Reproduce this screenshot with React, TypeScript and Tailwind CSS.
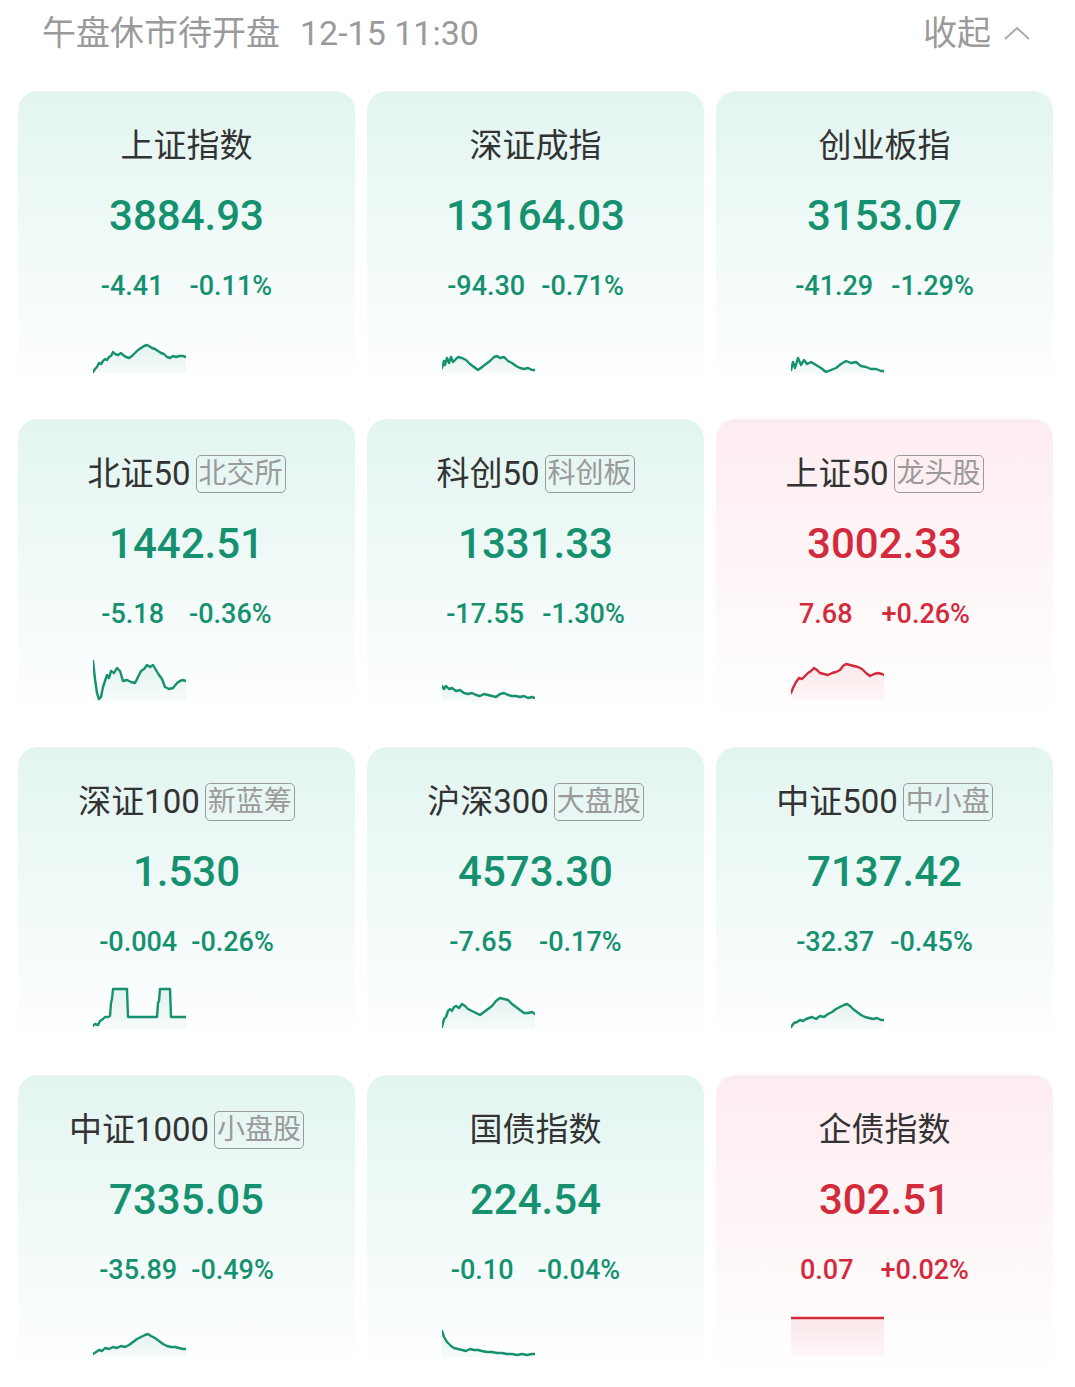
type Item = {
  name: string;
  tag?: string;
  price: string;
  change: string;
  pct: string;
  gap: string;
  up: boolean;
  pts: number[][];
};

const items: Item[] = [
  {
    name: "上证指数", price: "3884.93", change: "-4.41", pct: "-0.11%", gap: "gap-[26px]", up: false,
    pts: [[0,39],[2,36],[4,34],[6,30],[8,31],[10,28],[12,26],[14,27],[16,24],[18,23],[20,19],[22,21],[25,22],[28,20],[30,22],[33,24],[36,25],[39,23],[42,20],[45,17],[48,15],[51,13],[54,12],[56,13],[59,15],[62,16],[65,18],[68,20],[71,21],[74,24],[77,25],[80,23],[83,24],[86,23],[90,23],[93,24]],
  },
  {
    name: "深证成指", price: "13164.03", change: "-94.30", pct: "-0.71%", gap: "gap-[16px]", up: false,
    pts: [[0,35],[2,28],[3,32],[5,25],[7,30],[9,24],[11,29],[13,27],[16,24],[20,25],[24,27],[28,31],[32,34],[36,37],[40,34],[44,31],[48,28],[52,24],[55,23],[58,25],[62,24],[66,28],[70,30],[74,33],[78,35],[82,36],[86,35],[90,37],[93,37]],
  },
  {
    name: "创业板指", price: "3153.07", change: "-41.29", pct: "-1.29%", gap: "gap-[18px]", up: false,
    pts: [[0,37],[2,29],[4,35],[7,25],[10,32],[13,27],[16,31],[20,29],[25,32],[30,35],[35,39],[40,37],[45,35],[50,31],[55,28],[60,30],[65,29],[70,33],[75,34],[80,36],[85,36],[90,38],[93,38]],
  },
  {
    name: "北证50", tag: "北交所", price: "1442.51", change: "-5.18", pct: "-0.36%", gap: "gap-[25px]", up: false,
    pts: [[0,0],[2,18],[4,32],[6,38],[8,36],[10,26],[12,20],[14,14],[16,17],[18,10],[21,12],[24,7],[27,10],[30,20],[34,19],[38,21],[42,22],[45,16],[48,10],[51,8],[54,4],[57,6],[60,4],[63,9],[66,14],[69,18],[72,26],[76,28],[80,27],[84,22],[87,20],[90,19],[93,20]],
  },
  {
    name: "科创50", tag: "科创板", price: "1331.33", change: "-17.55", pct: "-1.30%", gap: "gap-[18px]", up: false,
    pts: [[0,25],[2,28],[4,25],[7,28],[10,27],[14,30],[18,29],[22,32],[26,33],[30,32],[34,34],[38,35],[42,33],[46,34],[50,35],[54,36],[58,33],[62,32],[66,34],[70,35],[74,35],[78,36],[82,35],[86,37],[90,36],[93,37]],
  },
  {
    name: "上证50", tag: "龙头股", price: "3002.33", change: "7.68", pct: "+0.26%", gap: "gap-[29px]", up: true,
    pts: [[0,32],[2,27],[5,21],[8,17],[11,18],[14,15],[17,12],[20,10],[23,7],[26,9],[29,12],[33,13],[37,14],[41,12],[45,11],[49,9],[52,5],[55,3],[59,4],[63,5],[67,6],[71,8],[75,12],[79,15],[83,13],[87,12],[91,13],[93,14]],
  },
  {
    name: "深证100", tag: "新蓝筹", price: "1.530", change: "-0.004", pct: "-0.26%", gap: "gap-[14px]", up: false,
    pts: [[0,37],[2,35],[5,36],[7,32],[10,30],[12,28],[15,28],[17,27],[18,14],[19,10],[20,0],[34,0],[35,28],[64,28],[65,14],[66,12],[67,0],[77,0],[78,28],[93,28]],
  },
  {
    name: "沪深300", tag: "大盘股", price: "4573.30", change: "-7.65", pct: "-0.17%", gap: "gap-[27px]", up: false,
    pts: [[0,38],[2,30],[4,28],[6,22],[8,20],[10,22],[12,18],[14,17],[17,19],[20,15],[23,17],[26,20],[30,22],[34,24],[38,26],[42,23],[46,20],[50,17],[54,12],[58,9],[62,10],[66,11],[70,15],[74,18],[78,21],[82,24],[86,24],[90,23],[93,25]],
  },
  {
    name: "中证500", tag: "中小盘", price: "7137.42", change: "-32.37", pct: "-0.45%", gap: "gap-[16px]", up: false,
    pts: [[0,38],[3,34],[6,33],[9,31],[12,32],[15,30],[18,29],[21,28],[25,30],[29,27],[33,28],[37,25],[41,23],[45,20],[49,18],[53,16],[56,15],[59,17],[62,20],[66,23],[70,26],[74,28],[78,29],[82,30],[86,29],[90,31],[93,31]],
  },
  {
    name: "中证1000", tag: "小盘股", price: "7335.05", change: "-35.89", pct: "-0.49%", gap: "gap-[14px]", up: false,
    pts: [[0,37],[3,35],[6,33],[9,34],[12,31],[16,32],[20,30],[24,31],[28,29],[32,30],[36,28],[40,25],[44,22],[48,20],[52,18],[55,17],[58,19],[62,21],[66,24],[70,27],[74,29],[78,30],[82,30],[86,31],[90,32],[93,32]],
  },
  {
    name: "国债指数", price: "224.54", change: "-0.10", pct: "-0.04%", gap: "gap-[24px]", up: false,
    pts: [[0,14],[2,20],[5,25],[9,29],[12,31],[16,32],[20,33],[24,34],[28,32],[32,33],[36,33],[40,34],[45,35],[50,35],[55,36],[60,36],[65,37],[70,37],[75,38],[80,37],[85,38],[90,37],[93,37]],
  },
  {
    name: "企债指数", price: "302.51", change: "0.07", pct: "+0.02%", gap: "gap-[27px]", up: true,
    pts: [[0,1],[93,1]],
  },
];

const Spark = ({ pts, up }: { pts: number[][]; up: boolean }) => {
  const line = pts.map((p) => `${p[0]},${p[1]}`).join(" ");
  const area = `0,40 ${line} 93,40`;
  const color = up ? "#d32a3c" : "#15916f";
  const id = up ? "fill-up" : "fill-down";
  return (
    <svg width={93} height={44} viewBox="0 -4 93 44" className="block">
      <defs>
        <linearGradient id={id} x1="0" y1="0" x2="0" y2="1">
          <stop offset="0%" stopColor={color} stopOpacity={0.1} />
          <stop offset="100%" stopColor={color} stopOpacity={0.03} />
        </linearGradient>
      </defs>
      <polygon points={area} fill={`url(#${id})`} />
      <polyline points={line} fill="none" stroke={color} strokeWidth={2.4} strokeLinejoin="round" strokeLinecap="round" />
    </svg>
  );
};

const Card = ({ item }: { item: Item }) => {
  const tone = item.up ? "text-[#d32a3c]" : "text-[#15916f]";
  return (
    <div
      className={`h-[300px] rounded-[20px] bg-gradient-to-b flex flex-col items-center ${
        item.up ? "from-[#fdecef] to-white" : "from-[#e2f5f1] to-white"
      }`}
    >
      <div className="mt-[35px] h-[40px] flex items-center gap-[5px]">
        <span className="text-[33px] leading-[40px] text-[#333333]">{item.name}</span>
        {item.tag && (
          <span className="h-[38px] px-[2px] flex items-center border-[1.5px] border-[#9a9a9a] rounded-[5px] text-[28px] leading-[34px] text-[#9a9a9a]">
            {item.tag}
          </span>
        )}
      </div>
      <div className={`mt-[24px] h-[52px] text-[42px] leading-[52px] font-medium ${tone}`}>{item.price}</div>
      <div className={`mt-[29px] h-[30px] flex items-center text-[27px] leading-[30px] font-medium ${tone} ${item.gap}`}>
        <span>{item.change}</span>
        <span>{item.pct}</span>
      </div>
      <div className="mt-[28px] self-start ml-[75px]">
        <Spark pts={item.pts} up={item.up} />
      </div>
    </div>
  );
};

export default function App() {
  return (
    <div className="w-[1075px] min-h-[1387px] bg-white font-['Roboto','Noto_Sans_CJK_SC',sans-serif]">
      <div className="h-[66px] pl-[42px] pr-[44px] flex items-center justify-between text-[#9a9a9a]">
        <div className="text-[34px] leading-[40px]">
          午盘休市待开盘<span className="ml-[20px]">12-15 11:30</span>
        </div>
        <div className="flex items-center gap-[12px] text-[34px] leading-[40px]">
          <span>收起</span>
          <svg width={28} height={18} viewBox="0 0 28 18" className="block">
            <polyline points="2,15 14,4 26,15" fill="none" stroke="#aaaaaa" strokeWidth={2} />
          </svg>
        </div>
      </div>
      <div className="mt-[25px] ml-[18px] w-[1035px] grid grid-cols-3 gap-x-[12px] gap-y-[28px]">
        {items.map((it) => (
          <Card key={it.name} item={it} />
        ))}
      </div>
    </div>
  );
}
